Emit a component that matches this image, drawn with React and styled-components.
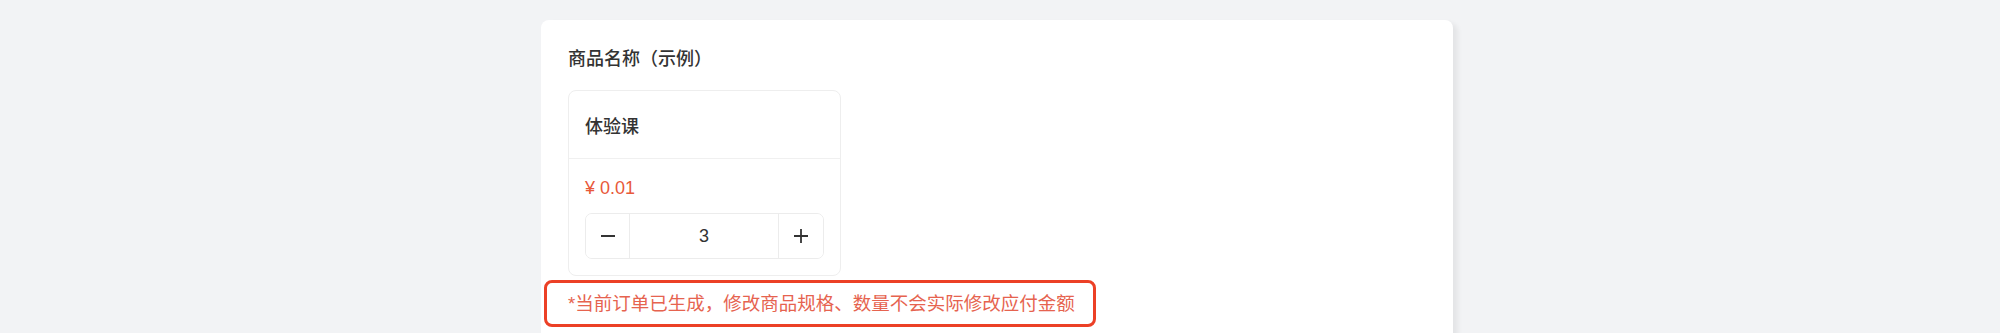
import React, { useState } from 'react';
import styled, { createGlobalStyle } from 'styled-components';

const GlobalStyle = createGlobalStyle`
  html, body {
    margin: 0;
    padding: 0;
    background: #f2f3f5;
    font-family: "Liberation Sans", "Noto Sans CJK SC", sans-serif;
    overflow: hidden;
  }
`;

const Page = styled.div`
  min-height: 333px;
  padding: 20px 0 0 541px;
`;

const Card = styled.div`
  width: 912px;
  min-height: 420px;
  box-sizing: border-box;
  padding: 26px 27px 40px;
  background: #fff;
  border-radius: 8px;
  box-shadow: 5px 3px 5px rgba(0, 0, 0, 0.06);
`;

const Title = styled.div`
  font-size: 18px;
  line-height: 26px;
  font-weight: 500;
  color: #333;
  margin-bottom: 18px;
`;

const GoodsCard = styled.div`
  width: 273px;
  box-sizing: border-box;
  border: 1px solid #eeeeee;
  border-radius: 8px;
`;

const GoodsHeader = styled.div`
  height: 67px;
  padding: 0 16px;
  display: flex;
  align-items: center;
  font-size: 18px;
  font-weight: 500;
  color: #333;
  border-bottom: 1px solid #f0f0f0;
`;

const GoodsBody = styled.div`
  padding: 16px 16px 16px;
  display: flex;
  flex-direction: column;
  gap: 12px;
`;

const Price = styled.div`
  font-size: 18px;
  line-height: 26px;
  color: #e8593a;
`;

const Stepper = styled.div`
  display: grid;
  grid-template-columns: 44px 1fr 45px;
  height: 46px;
  box-sizing: border-box;
  border: 1px solid #ececec;
  border-radius: 7px;
  overflow: hidden;
`;

const StepButton = styled.button`
  border: none;
  background: #fff;
  padding: 0;
  display: flex;
  align-items: center;
  justify-content: center;
  cursor: pointer;
  color: #333;
  border-left: ${(p) => (p.$side === 'right' ? '1px solid #ececec' : 'none')};
  border-right: ${(p) => (p.$side === 'left' ? '1px solid #ececec' : 'none')};
`;

const Count = styled.div`
  display: flex;
  align-items: center;
  justify-content: center;
  font-size: 18px;
  color: #333;
`;

const Notice = styled.div`
  display: inline-block;
  margin: 4px 0 0 -24px;
  padding: 8px 18px 7px 21px;
  border: 3px solid #ec4026;
  border-radius: 8px;
  font-size: 18.5px;
  line-height: 26px;
  color: #e6634f;
`;

const Icon = ({ plus }) => (
  <svg width="16" height="16" viewBox="0 0 16 16">
    <path d="M1 8h14" stroke="currentColor" strokeWidth="1.8" />
    {plus && <path d="M8 1v14" stroke="currentColor" strokeWidth="1.8" />}
  </svg>
);

const App = () => {
  const [count, setCount] = useState(3);

  return (
    <Page>
      <GlobalStyle />
      <Card>
        <Title>商品名称（示例）</Title>
        <GoodsCard>
          <GoodsHeader>体验课</GoodsHeader>
          <GoodsBody>
            <Price>¥ 0.01</Price>
            <Stepper>
              <StepButton $side="left" onClick={() => setCount(Math.max(1, count - 1))}>
                <Icon />
              </StepButton>
              <Count>{count}</Count>
              <StepButton $side="right" onClick={() => setCount(count + 1)}>
                <Icon plus />
              </StepButton>
            </Stepper>
          </GoodsBody>
        </GoodsCard>
        <Notice>*当前订单已生成，修改商品规格、数量不会实际修改应付金额</Notice>
      </Card>
    </Page>
  );
};

export default App;
